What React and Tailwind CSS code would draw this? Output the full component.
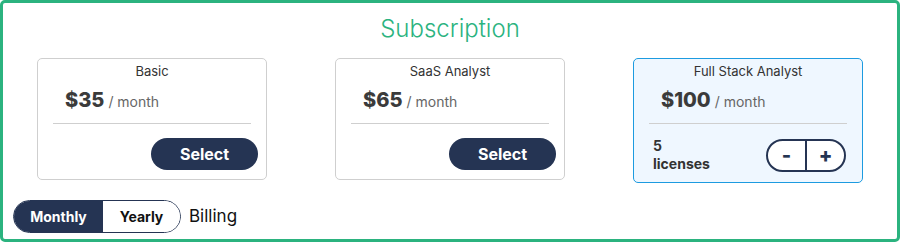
import { useState } from 'react';

const plans = [
  { name: 'Basic', price: 35 },
  { name: 'SaaS Analyst', price: 65 },
  { name: 'Full Stack Analyst', price: 100, active: true },
];

const PlanCard = ({ plan, licenses, setLicenses }) => {
  return (
    <div
      className={
        'w-[230px] rounded-[5px] border flex flex-col pt-[3px] pb-[9px] ' +
        (plan.active ? 'border-[#1d9be0] bg-[#eff7ff]' : 'border-[#cfcfcf] bg-white')
      }
    >
      <div className="text-center text-[13px] leading-[18px] text-[#333]">{plan.name}</div>
      <div className="mt-[6px] pl-[27px] flex items-baseline gap-[4px] text-[#3b3b3b]">
        <span className="text-[20px] leading-[28px] font-extrabold">${plan.price}</span>
        <span className="text-[14px] text-[#666]">/ month</span>
      </div>
      <div className="mx-[15px] mt-[9px] border-t border-[#cfcfcf]" />
      {plan.active ? (
        <div className="mt-[13px] pl-[19px] pr-[16px] flex items-center justify-between">
          <div className="text-[14px] leading-[18px] font-bold text-[#333] w-[60px]">
            {licenses}
            <br />
            licenses
          </div>
          <div className="flex h-[33px] w-[80px] rounded-full border-2 border-[#253453] overflow-hidden bg-white">
            <button
              onClick={() => setLicenses(Math.max(1, licenses - 1))}
              className="flex-1 text-[20px] font-extrabold text-[#253453] leading-none"
            >
              -
            </button>
            <button
              onClick={() => setLicenses(licenses + 1)}
              className="flex-1 border-l-2 border-[#253453] text-[20px] font-extrabold text-[#253453] leading-none"
            >
              +
            </button>
          </div>
        </div>
      ) : (
        <div className="mt-[14px] pr-[8px] flex justify-end">
          <button className="w-[107px] h-[32px] rounded-full bg-[#253453] text-white text-[16px] font-bold">
            Select
          </button>
        </div>
      )}
    </div>
  );
};

export default function App() {
  const [licenses, setLicenses] = useState(5);
  const [billing, setBilling] = useState('monthly');

  return (
    <div
      className="w-[900px] h-[242px] border-[3px] border-[#2bb37f] rounded-[5px] flex flex-col bg-white"
      style={{ fontFamily: 'Inter, "Liberation Sans", sans-serif' }}
    >
      <h1 className="mt-[10px] text-center text-[24px] leading-[32px] font-light text-[#2bb37f]">Subscription</h1>
      <div className="mt-[13px] flex justify-around items-start">
        {plans.map((p) => (
          <PlanCard key={p.name} plan={p} licenses={licenses} setLicenses={setLicenses} />
        ))}
      </div>
      <div className="mt-auto mb-[6px] ml-[10px] flex items-center gap-[8px]">
        <div className="flex h-[33px] rounded-full border border-[#253453] overflow-hidden">
          <button
            onClick={() => setBilling('monthly')}
            className={
              'w-[89px] text-[14px] font-bold ' +
              (billing === 'monthly' ? 'bg-[#253453] text-white' : 'bg-white text-[#111]')
            }
          >
            Monthly
          </button>
          <button
            onClick={() => setBilling('yearly')}
            className={
              'w-[77px] text-[14px] font-bold ' +
              (billing === 'yearly' ? 'bg-[#253453] text-white' : 'bg-white text-[#111]')
            }
          >
            Yearly
          </button>
        </div>
        <span className="text-[17px] text-[#111]">Billing</span>
      </div>
    </div>
  );
}
